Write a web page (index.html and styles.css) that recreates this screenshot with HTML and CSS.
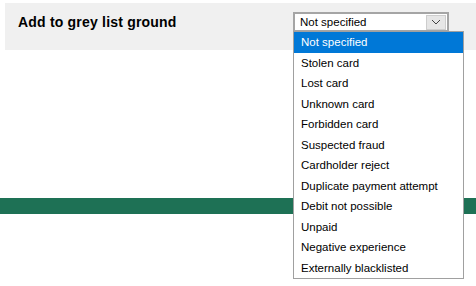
FILE: index.html
```html
<!DOCTYPE html>
<html lang="en">
<head>
  <meta charset="UTF-8" />
  <meta name="viewport" content="width=device-width, initial-scale=1.0" />
  <title>Grey list ground</title>
  <link rel="stylesheet" href="styles.css">
</head>
<body>
  <div class="panel">
    <h2 class="title">Add to grey list ground</h2>
    <div class="select">
      <div class="select-value">Not specified</div>
      <div class="select-arrow">
        <svg width="10" height="6" viewBox="0 0 10 6"><path d="M1 1 L5 5 L9 1" fill="none" stroke="#444" stroke-width="1"/></svg>
      </div>
      <ul class="options">
        <li class="selected">Not specified</li>
        <li>Stolen card</li>
        <li>Lost card</li>
        <li>Unknown card</li>
        <li>Forbidden card</li>
        <li>Suspected fraud</li>
        <li>Cardholder reject</li>
        <li>Duplicate payment attempt</li>
        <li>Debit not possible</li>
        <li>Unpaid</li>
        <li>Negative experience</li>
        <li>Externally blacklisted</li>
      </ul>
    </div>
  </div>

  <div class="bar"></div>
</body>
</html>
```

FILE: styles.css
```css
* {
  box-sizing: border-box;
  margin: 0;
  padding: 0;
}
html, body {
  min-height: 100vh;
}
body {
  font-family: "Liberation Sans", Arial, sans-serif;
  background-color: #fff;
  color: #000;
}

.panel {
  margin: 3px 0 0 5px;
  height: 47px;
  background-color: #f0f0f0;
  display: flex;
  align-items: flex-start;
  padding: 9px 0 0 13px;
}

.title {
  font-size: 14px;
  font-weight: bold;
  letter-spacing: 0.2px;
  line-height: 16px;
  margin-top: 2px;
  width: 275px;
}

.select {
  position: relative;
  width: 156px;
  height: 20px;
  background: #fff;
  border: 2px solid #a5a5a5;
  display: flex;
  align-items: center;
  font-size: 11.5px;
}

.select-value {
  flex: 1;
  padding-left: 5px;
}

.select-arrow {
  width: 20px;
  height: 15px;
  margin-right: 1px;
  background: #e6e6e6;
  border: 1px solid #cdcdcd;
  display: flex;
  align-items: center;
  justify-content: center;
}

.options {
  position: absolute;
  top: 17px;
  left: -2px;
  width: 171px;
  list-style: none;
  background: #fff;
  border: 1px solid #a0a0a0;
  z-index: 2;
}

.options li {
  height: 20.5px;
  line-height: 20.5px;
  padding-left: 7px;
  font-size: 11.5px;
}

.options .selected {
  background: #0078d7;
  color: #fff;
}

.bar {
  margin-top: 148px;
  height: 16px;
  background-color: #1e7155;
}
```
